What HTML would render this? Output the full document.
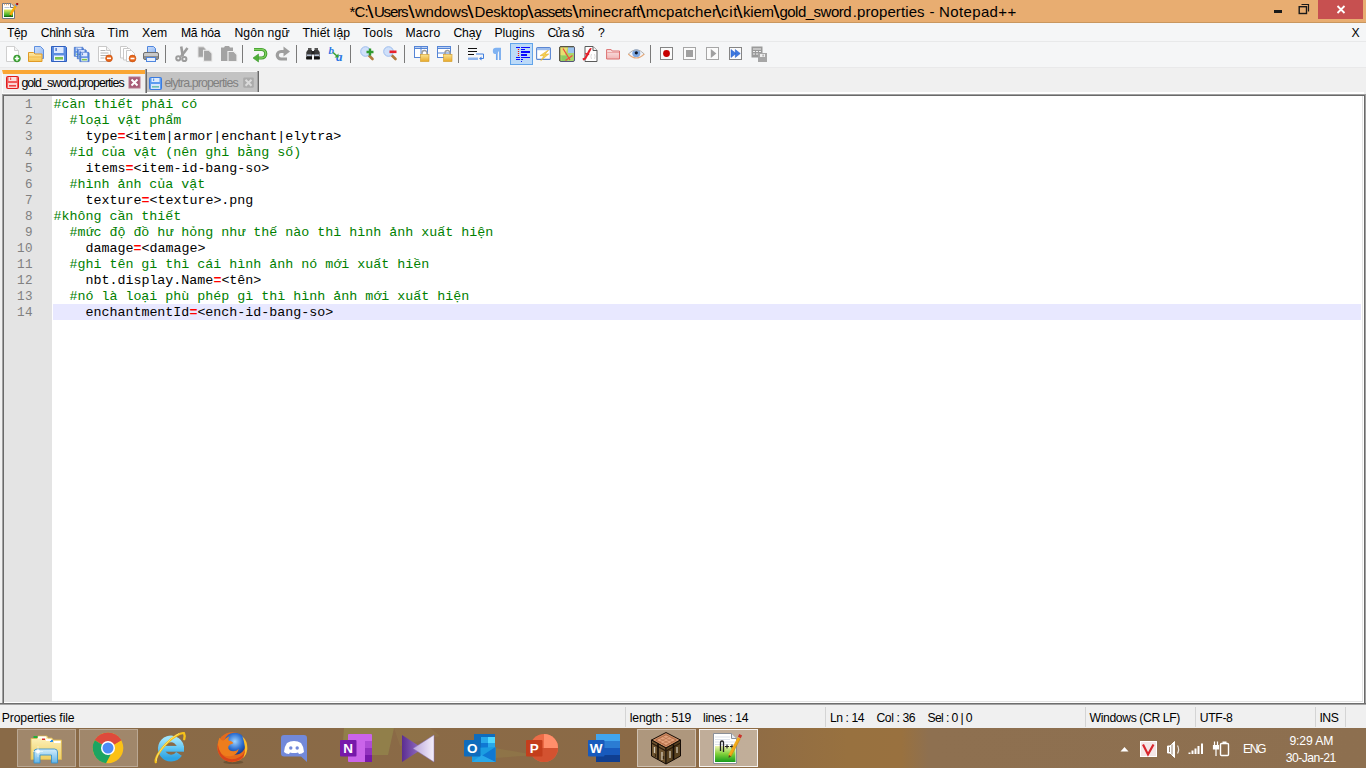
<!DOCTYPE html>
<html lang="vi">
<head>
<meta charset="utf-8">
<title>Notepad++</title>
<style>
*{box-sizing:border-box;margin:0;padding:0}
html,body{width:1366px;height:768px;overflow:hidden;background:#f0f0f0}
body{position:relative;font-family:"Liberation Sans",sans-serif;font-size:12px;color:#000}
.abs{position:absolute}
.t{position:absolute;white-space:pre;line-height:normal;font-family:"Liberation Sans",sans-serif}
#titlebar{left:0;top:0;width:1366px;height:23px;background:#e8ad71;border-bottom:1px solid #c9975f}
#closebtn{left:1318px;top:0;width:45px;height:19px;background:#c75050}
#menubar{left:0;top:23px;width:1366px;height:19px;background:#f5f6f7;border-bottom:1px solid #e8e9ea}
#toolbar{left:0;top:42px;width:1366px;height:25.5px;background:#f5f6f7;border-bottom:1px solid #e9e9ea}
#tabbar{left:0;top:67.5px;width:1366px;height:27px;background:#f0f0f0}
.vl{position:absolute;width:1px}
#tab1{left:2px;top:70px;width:143px;height:23px;background:#f0f0f0;border-top:4px solid #faa634;border-left:1px solid #fbfbfb}
#tab2{left:147px;top:71px;width:110px;height:21px;background:#c3c3c3;border-top:1px solid #f6f6f6}
#edframe{left:2px;top:94px;width:1364px;height:611px;background:#fff;border-top:1px solid #a0a0a0;border-left:1px solid #a0a0a0;border-right:1px solid #a0a0a0;border-bottom:1px solid #a0a0a0}
#edframe2{left:3px;top:95px;width:1362px;height:609px;background:#fff;border-top:1px solid #696969;border-left:1px solid #696969;border-right:1px solid #696969;border-bottom:1px solid #696969}
#edinner{left:4px;top:96px;width:1360px;height:607px;background:#fff;border-right:2px solid #fff;border-bottom:2px solid #fff}
#edin2{left:4px;top:96px;width:1359px;height:606px;border-right:1px solid #e3e3e3;border-bottom:1px solid #e3e3e3}
#gutter{left:4px;top:96px;width:48px;height:605px;background:#e4e4e4}
.ln{position:absolute;left:4px;width:28.9px;text-align:right;font-family:"Liberation Mono",monospace;font-size:12.6px;letter-spacing:.44px;color:#808080;height:16px;line-height:16px;white-space:pre}
.cl{position:absolute;font-family:"Liberation Mono",monospace;font-size:13.33px;height:16px;line-height:16px;white-space:pre;color:#000}
.c{color:#008000}.e{color:#ff0000;font-weight:bold}
#curline{left:53px;top:304px;width:1308px;height:16px;background:#e8e8ff}
#statusbar{left:0;top:705px;width:1366px;height:23px;background:#f0f0f0}
#statusbar i{position:absolute;top:2px;width:1px;height:20px;background:#d4d4d4}
#taskbar{left:0;top:728px;width:1366px;height:40px;background:linear-gradient(90deg,#896a47 0,#8b6a46 50%,#8f6c45 55%,#98713f 62%,#99713f 66%,#8e7050 68%,#8d6f4f 100%)}
.tb{position:absolute;top:729px;width:58.5px;height:38px;background:rgba(255,255,255,.2);border:1px solid rgba(255,255,255,.28)}
</style>
</head>
<body>
<div id="titlebar" class="abs"></div>
<svg class="abs" style="left:0;top:0" width="24" height="23" viewBox="0 0 24 23">
<defs><linearGradient id="ng" x1="0" y1="0" x2="0" y2="1"><stop offset="0" stop-color="#e6ea62"/><stop offset=".75" stop-color="#3fae28"/><stop offset="1" stop-color="#0c5a0a"/></linearGradient></defs>
<path d="M2.5 3.500h8.500l3.500 3.500v11.500h-12z" fill="#fff" stroke="#707782"/>
<path d="M10.500 3.500v4h4" fill="#eef1f5" stroke="#707782"/>
<path d="M4 4.500h1M6 4.500h1M8 4.500h1" stroke="#e8ab70" stroke-width="1.400"/>
<path d="M4.500 7.500h5" stroke="#b9c6d6" stroke-width="1"/>
<rect x="4" y="9.500" width="9" height="7.500" fill="url(#ng)"/>
<path d="M10.300 15.200l5.700-10" stroke="#f5ab0c" stroke-width="2.400"/>
<path d="M9.600 16.500l.4-1.800 1.200.7z" fill="#4a3a20"/>
<path d="M15.600 6l1-1.700" stroke="#7d9cc4" stroke-width="2.600"/>
<rect x="16.200" y="3" width="2" height="2" fill="#a30d12"/>
</svg>
<div id="closebtn" class="abs"></div>
<svg class="abs" style="left:1270px;top:0" width="96" height="23" viewBox="0 0 96 23">
<rect x="4" y="10" width="8" height="3" fill="#1a1a1a"/>
<path d="M31.500 4.500h7v7" fill="none" stroke="#1a1a1a" stroke-width="1.200"/>
<rect x="29.200" y="6.700" width="7.300" height="6.800" fill="none" stroke="#1a1a1a" stroke-width="1.400"/>
<path d="M67.500 6l7 7M74.500 6l-7 7" stroke="#fff" stroke-width="1.800"/>
</svg>
<div id="menubar" class="abs"></div>
<div id="toolbar" class="abs"></div>
<svg id="tbsvg" class="abs" style="left:0;top:42px" width="1366" height="26" viewBox="0 0 1366 26">
<defs>
<linearGradient id="gFold" x1="0" y1="0" x2="0" y2="1"><stop offset="0" stop-color="#fde9a8"/><stop offset="1" stop-color="#f6c453"/></linearGradient>
<linearGradient id="gLock" x1="0" y1="0" x2="0" y2="1"><stop offset="0" stop-color="#fbe38f"/><stop offset="1" stop-color="#e8a92a"/></linearGradient>
<linearGradient id="gPage" x1="0" y1="0" x2="1" y2="1"><stop offset="0" stop-color="#cfe0fb"/><stop offset="1" stop-color="#8fb5ef"/></linearGradient>
<linearGradient id="gPink" x1="0" y1="0" x2="0" y2="1"><stop offset="0" stop-color="#fbe6e6"/><stop offset="1" stop-color="#f0b6b6"/></linearGradient>
<g id="floppy"><path d="M0.5 0.5h14l1 1v14h-15z" fill="#5b8de0" stroke="#2f5fc0"/><rect x="3" y="1" width="9.5" height="6" fill="#dfeaff"/><rect x="4.5" y="2" width="1.2" height="3" fill="#2f5fc0"/><rect x="3" y="9.5" width="10" height="5.5" fill="#eef3ff"/><rect x="4" y="11" width="8" height="2.6" fill="#7cc34a"/></g>
<g id="minus"><circle cx="0" cy="0" r="3.4" fill="#e8661a" stroke="#c24e0c" stroke-width=".6"/><rect x="-2" y="-.8" width="4" height="1.6" fill="#fff"/></g>
<g id="sep"><rect x="0" y="3" width="1" height="18" fill="#7a7a7a"/></g>
</defs>
<!-- new -->
<g transform="translate(5,4)"><path d="M1.5 .5h8l4 4v11h-12z" fill="#fff" stroke="#cfcfcf"/><path d="M9.5 .5v4h4" fill="#f2f2f2" stroke="#cfcfcf"/><circle cx="12" cy="12.5" r="3.4" fill="#3faa35" stroke="#2a8424" stroke-width=".6"/><path d="M12 10.3v4.4M9.8 12.5h4.4" stroke="#fff" stroke-width="1.5"/></g>
<!-- open -->
<g transform="translate(28,4)"><path d="M6.5 .5h6l3 3v9h-9z" fill="url(#gPage)" stroke="#5d8fe0"/><path d="M.5 6.500h5l1.500 1.500h7v7.500h-13.500z" fill="url(#gFold)" stroke="#e09a26"/><path d="M1 11h12.500" stroke="#f1b84a" stroke-width="1"/></g>
<!-- save -->
<g transform="translate(51,4)"><use href="#floppy"/></g>
<!-- save all -->
<g transform="translate(74,4)"><g transform="translate(0,1) scale(.6)"><use href="#floppy"/></g><g transform="translate(3,3.500) scale(.6)"><use href="#floppy"/></g><g transform="translate(5.500,6) scale(.62)"><use href="#floppy"/></g></g>
<!-- close -->
<g transform="translate(97,4)"><path d="M1.500 .5h8l4 4v11h-12z" fill="#fff" stroke="#c9c9c9"/><path d="M9.500 .5v4h4" fill="#f2f2f2" stroke="#c9c9c9"/><path d="M3.500 4.500h5M3.500 7h8M3.500 9.500h8M3.500 12h4" stroke="#b5b5b5" stroke-width="1"/><use href="#minus" x="12" y="12.300"/></g>
<!-- close all -->
<g transform="translate(120,4)"><path d="M.5 .5h6l3 3v8.500h-9z" fill="#fff" stroke="#c9c9c9"/><path d="M3.500 2.500h6l3 3v8.500h-9z" fill="#fff" stroke="#c9c9c9"/><path d="M6.500 4.500h5l3 3v8h-8z" fill="#fff" stroke="#c9c9c9"/><use href="#minus" x="12.500" y="12.500"/></g>
<!-- print -->
<g transform="translate(143,4)"><path d="M4.500 .5h6l2 2v5h-8z" fill="url(#gPage)" stroke="#4f86de"/><rect x=".5" y="6.500" width="15" height="7" rx="1.500" fill="#c9c9c9" stroke="#6f6f6f"/><rect x="1" y="10" width="14" height="3" fill="#8e8e8e"/><rect x="3.500" y="11.500" width="9" height="4" fill="#e8f1ff" stroke="#4f86de"/></g>
<use href="#sep" x="165"/>
<!-- cut -->
<g transform="translate(175,4)" fill="none" stroke="#9c9c9c"><path d="M6.200 .5l1.600 9.500" stroke-width="2.600"/><path d="M12.500 2l-6.500 8.500" stroke-width="2.600"/><circle cx="3.300" cy="12.300" r="2.100" stroke-width="2"/><circle cx="9.300" cy="13" r="2.100" stroke-width="2"/></g>
<!-- copy -->
<g transform="translate(197,4)"><path d="M1 .8h5.500l2.500 2.500v8h-8z" fill="#a4a4a4" stroke="#e4e4e4" stroke-width="1"/><path d="M6.500 4.300h5.500l3 3v8h-8.500z" fill="#a4a4a4" stroke="#ececec" stroke-width="1.100"/></g>
<!-- paste -->
<g transform="translate(221,4)"><path d="M0 1.500h3l1-1.500h4l1 1.500h3v13.500h-12z" fill="#a3a3a3"/><path d="M7 5.500h6l3 3v7h-9z" fill="#a6a6a6" stroke="#f0f0f0" stroke-width="1.200"/></g>
<use href="#sep" x="242"/>
<!-- undo -->
<g transform="translate(252,4)"><path d="M2 3.500h7.500a4 4 0 0 1 0 8.500h-4.500" fill="none" stroke="#3d9a2c" stroke-width="3.200"/><path d="M2 3.500h7.500a4 4 0 0 1 0 8.500h-4.500" fill="none" stroke="#7fd05e" stroke-width="1.400"/><path d="M6.500 8l-5.500 4 5.500 4z" fill="#4fae39" stroke="#3d9a2c" stroke-width=".6"/></g>
<!-- redo -->
<g transform="translate(275,4)"><path d="M10 5.500h-4a3.500 3.500 0 0 0 0 7.500h6" fill="none" stroke="#9e9e9e" stroke-width="3.200"/><path d="M8.500 .5l6.500 5-6.500 5z" fill="#9e9e9e"/></g>
<use href="#sep" x="296"/>
<!-- find binoculars -->
<g transform="translate(306,4.500)"><path d="M2 1.500h3.500v3h-3.500zM8.500 1.500h3.500v3h-3.500z" fill="#555"/><path d="M.3 5.500l1.500-2h4.200v9h-5.700zM13.700 5.500l-1.500-2h-4.200v9h5.700z" fill="#3a3a3a"/><rect x="5.500" y="4.500" width="3" height="3.500" fill="#222"/><rect x=".8" y="8" width="4.800" height="1.400" fill="#c4d0e4"/><rect x="8.400" y="8" width="4.800" height="1.400" fill="#c4d0e4"/><rect x=".3" y="10.500" width="5.700" height="2.500" fill="#111"/><rect x="8" y="10.500" width="5.700" height="2.500" fill="#111"/></g>
<!-- replace -->
<g transform="translate(329,4)"><text x="-.5" y="8" font-family="Liberation Serif,serif" font-style="italic" font-weight="bold" font-size="11" fill="#2a78e4">b</text><text x="7" y="15" font-family="Liberation Serif,serif" font-style="italic" font-weight="bold" font-size="13" fill="#2a78e4">a</text><path d="M4 6.500l4 3.500" stroke="#3aa335" stroke-width="1.600"/><path d="M5.500 11.500h4v-4z" fill="#3aa335"/></g>
<use href="#sep" x="350"/>
<!-- zoom in -->
<g transform="translate(360,4)"><path d="M8 8.500l4.500 4.500" stroke="#b07a3c" stroke-width="2.600" stroke-linecap="round"/><circle cx="5.500" cy="5.500" r="4.800" fill="#cfe0fa" stroke="#9dbdee" stroke-width="1"/><path d="M10 2.500v7M6.500 6h7" stroke="#2f9a2f" stroke-width="2.400"/></g>
<!-- zoom out -->
<g transform="translate(383,4)"><path d="M8 8.500l4.500 4.500" stroke="#b07a3c" stroke-width="2.600" stroke-linecap="round"/><circle cx="5.500" cy="5.500" r="4.800" fill="#cfe0fa" stroke="#9dbdee" stroke-width="1"/><rect x="6.500" y="4.500" width="7" height="2.600" fill="#e8212c"/></g>
<use href="#sep" x="404"/>
<!-- sync v -->
<g transform="translate(414,4)"><rect x=".5" y=".5" width="13" height="11" fill="#fff" stroke="#5585d6"/><rect x=".5" y=".5" width="13" height="2" fill="#b9cff4" stroke="#5585d6"/><path d="M7 .5v11" stroke="#5585d6"/><path d="M8 8.500v-1.500a2.500 2.500 0 0 1 5 0v1.500" fill="none" stroke="#9c9c9c" stroke-width="1.500"/><rect x="6.500" y="8.500" width="8.500" height="7" fill="url(#gLock)" stroke="#d39922" stroke-width=".6"/></g>
<!-- sync h -->
<g transform="translate(437,4)"><rect x=".5" y=".5" width="13" height="11" fill="#fff" stroke="#5585d6"/><rect x=".5" y=".5" width="13" height="2" fill="#b9cff4" stroke="#5585d6"/><path d="M.5 7h13" stroke="#5585d6"/><path d="M8 8.500v-1.500a2.500 2.500 0 0 1 5 0v1.500" fill="none" stroke="#9c9c9c" stroke-width="1.500"/><rect x="6.500" y="8.500" width="8.500" height="7" fill="url(#gLock)" stroke="#d39922" stroke-width=".6"/></g>
<use href="#sep" x="458"/>
<!-- wrap -->
<g transform="translate(468,4)"><path d="M0 2.500h9M0 5.500h9" stroke="#111" stroke-width="1"/><path d="M0 8.500h6" stroke="#111" stroke-width="1"/><path d="M8 8h7.500v4.500h-3" fill="none" stroke="#3f7fe0" stroke-width="1"/><path d="M13.500 10.500l-2.500 2 2.500 2z" fill="#3f7fe0"/><rect x="0" y="11.500" width="10" height="2.500" fill="#8db4ee"/></g>
<!-- all chars -->
<g transform="translate(491,4)"><path d="M5.800 2v12M9 2v12" stroke="#6ea6ee" stroke-width="1.700"/><path d="M10 1.700h-5a3.200 3.200 0 0 0 0 6.400h1z" fill="#7fb2f2"/></g>
<!-- indent guide (active) -->
<rect x="510.500" y="1.500" width="22" height="21" fill="#bcdaf8" stroke="#62a4ea"/>
<g transform="translate(514,4)"><path d="M2 1.500h4M7 1.500h9M7 3.500h4M2 11.500h4M7 11.500h9M2 13.500h4M7 13.500h2M7 15.500h1" stroke="#0a0aff" stroke-width="1.100"/><path d="M7 6h9M7 9h6" stroke="#0a0aff" stroke-width="1.800"/><path d="M4.500 3v7.500" stroke="#f01010" stroke-width="1.200" stroke-dasharray="1.100 .9"/></g>
<!-- udl -->
<g transform="translate(536,4)"><rect x=".6" y="1.600" width="13.800" height="11.800" rx="1" fill="#fff" stroke="#5a86d2" stroke-width="1.100"/><rect x="1" y="2" width="13" height="2.200" fill="#9dbdee"/><path d="M11.500 4.500l-7.500 5.200h3.800l-3 5 8-6.700h-3.800l3.500-3.500z" fill="#f3cf52" stroke="#e0aa28" stroke-width=".5"/></g>
<!-- doc map -->
<g transform="translate(559,4)"><rect x=".5" y=".5" width="15" height="15" rx="1.500" fill="#a9d66c" stroke="#55557a"/><path d="M1 1h8l-3 8h-5z" fill="#e6e070"/><rect x="9" y="1" width="6" height="6" fill="#9cc4ee"/><path d="M2.500 10h6v5h-6z" fill="#8ccc60"/><path d="M1 .8h14M.8 1v14" stroke="#5a5632" stroke-width="1"/><path d="M4 2.500l7 11.500M13.500 9.500l-7 5" stroke="#f0503c" stroke-width="1.300"/></g>
<!-- function list -->
<g transform="translate(582,4)"><path d="M3 .5h8l4 4v11h-12z" fill="#fff" stroke="#5a5a5a"/><path d="M11 .5v4h4" fill="#f4f4f4" stroke="#5a5a5a"/><path d="M.8 13.500l2.500-1 4.500-8.500q.6-1.200 1.500-.8" fill="none" stroke="#e4202c" stroke-width="2.100"/><path d="M3.200 7.500l4 1" stroke="#e4202c" stroke-width="1.500"/><path d="M9.500 8q-1.200 2.500 0 5M12.500 8q1.200 2.500 0 5" fill="none" stroke="#d8d8d8" stroke-width=".9"/></g>
<!-- folder workspace -->
<g transform="translate(606,3)"><path d="M.6 4.600h4.600l1 1.400h7.300v8h-12.900z" fill="url(#gPink)" stroke="#dc6f6f"/><path d="M1.200 7.500h11.800" stroke="#e79a9a" stroke-width=".8"/></g>
<!-- eye -->
<g transform="translate(628,4)"><path d="M.3 8q8-8.500 16 0q-8 8-16 0z" fill="#f2f4f8"/><circle cx="8.300" cy="7.300" r="4" fill="#7fa9e2"/><circle cx="8.300" cy="6.800" r="1.600" fill="#101828"/><path d="M.3 8q8-8.500 16 0" fill="none" stroke="#b0b0b0" stroke-width="1"/><path d="M.3 8q8 8 16 0" fill="none" stroke="#e4a878" stroke-width="1.100"/></g>
<use href="#sep" x="650"/>
<!-- record -->
<g transform="translate(660,4)"><rect x=".5" y="1.500" width="12" height="12" fill="#fbfbfb" stroke="#858585"/><circle cx="6.500" cy="7.500" r="3.400" fill="#c80000"/></g>
<!-- stop -->
<g transform="translate(683,4)"><rect x=".5" y="1.500" width="12" height="12" fill="#fbfbfb" stroke="#a6a6a6"/><rect x="3" y="4" width="7" height="7" fill="#a0a0a0"/></g>
<!-- play -->
<g transform="translate(706,4)"><rect x=".5" y="1.500" width="12" height="12" fill="#fbfbfb" stroke="#a6a6a6"/><path d="M4.800 3l5.600 4.500-5.600 4.500z" fill="#a0a0a0"/></g>
<!-- play multi -->
<g transform="translate(729,4)"><rect x=".5" y="1.500" width="12" height="12" fill="#fbfbfb" stroke="#858585"/><path d="M2 3.500l5 4-5 4zM6.300 3.500l5 4-5 4z" fill="#3c78e0" stroke="#2a5fc4" stroke-width=".5"/></g>
<!-- save macro -->
<g transform="translate(751,4)"><rect x=".5" y=".5" width="11" height="11" fill="#9a9a9a"/><path d="M2 3h8M2 5.500h2M5 5.500h2M8 5.500h2M2 8h2M5 8h2" stroke="#efefef" stroke-width="1"/><rect x="7" y="7" width="9" height="9" fill="#a6a6a6"/><rect x="9" y="8" width="5" height="3" fill="#efefef"/><rect x="11.500" y="8.500" width="1.200" height="2" fill="#9a9a9a"/></g>
</svg>

<div id="tabbar" class="abs"></div>
<div id="tab2" class="abs"></div>
<div id="tab1" class="abs"></div>
<div class="abs" style="left:147px;top:92px;width:1217px;height:2px;background:#fff"></div>
<div class="abs" style="left:2px;top:93px;width:145px;height:1px;background:#fcfcfc"></div>
<div class="vl" style="left:145px;top:69px;height:24px;background:#a0a0a0"></div><div class="vl" style="left:146px;top:69px;height:24px;background:#696969"></div>
<div class="vl" style="left:257px;top:71px;height:21px;background:#a0a0a0"></div><div class="vl" style="left:258px;top:71px;height:21px;background:#696969"></div>
<svg class="abs" style="left:0;top:68px" width="270" height="26" viewBox="0 0 270 26">
<defs><g id="tsave"><rect x=".5" y=".5" width="12" height="12" rx="1"/><rect x="2.500" y="1" width="8" height="4" fill="#fff" fill-opacity=".8" stroke="none"/><rect x="4" y="1.500" width="1.200" height="2.500" stroke="none"/><rect x="2" y="7" width="9" height="5" fill="#fff" fill-opacity=".75" stroke="none"/></g></defs>
<g transform="translate(6,8)" fill="#f05a5a" stroke="#e01b1b"><use href="#tsave"/><rect x="3" y="9" width="7" height="1.600" fill="#ee4444" stroke="none"/></g>
<g transform="translate(149,9)" fill="#5c9bf0" stroke="#3a7be0"><use href="#tsave"/><rect x="3" y="9" width="7" height="1.600" fill="#6fc0b0" stroke="none"/></g>
<rect x="129" y="9" width="11" height="11" fill="#a85b76"/><rect x="129" y="9" width="11" height="11" fill="none" stroke="#b87a8e" stroke-width="1"/>
<path d="M131.500 11.500l6 6M137.500 11.500l-6 6" stroke="#fff" stroke-width="2"/>
<rect x="243.200" y="9.500" width="10.600" height="10.300" rx="1.200" fill="#ababab"/>
<path d="M245.500 11.700l6 6M251.500 11.700l-6 6" stroke="#dadada" stroke-width="2"/>
</svg>
<div id="edframe" class="abs"></div>
<div id="edframe2" class="abs"></div>
<div id="edinner" class="abs"></div>
<div id="edin2" class="abs"></div>
<div id="gutter" class="abs"></div>
<div class="abs" style="left:0;top:703px;width:1366px;height:1px;background:#6e6e6e"></div><div class="abs" style="left:0;top:704px;width:1366px;height:1px;background:#a3a3a3"></div>
<div id="curline" class="abs"></div>
<div id="lines">
<div class="ln" style="top:97px">1</div>
<div class="cl" style="top:97px;left:53.4px"><span class="c">#cần thiết phải có</span></div>
<div class="ln" style="top:113px">2</div>
<div class="cl" style="top:113px;left:69.4px"><span class="c">#loại vật phẩm</span></div>
<div class="ln" style="top:129px">3</div>
<div class="cl" style="top:129px;left:85.4px">type<span class="e">=</span>&lt;item|armor|enchant|elytra&gt;</div>
<div class="ln" style="top:145px">4</div>
<div class="cl" style="top:145px;left:69.4px"><span class="c">#id của vật (nên ghi bằng số)</span></div>
<div class="ln" style="top:161px">5</div>
<div class="cl" style="top:161px;left:85.4px">items<span class="e">=</span>&lt;item-id-bang-so&gt;</div>
<div class="ln" style="top:177px">6</div>
<div class="cl" style="top:177px;left:69.4px"><span class="c">#hình ảnh của vật</span></div>
<div class="ln" style="top:193px">7</div>
<div class="cl" style="top:193px;left:85.4px">texture<span class="e">=</span>&lt;texture&gt;.png</div>
<div class="ln" style="top:209px">8</div>
<div class="cl" style="top:209px;left:53.4px"><span class="c">#không cần thiết</span></div>
<div class="ln" style="top:225px">9</div>
<div class="cl" style="top:225px;left:69.4px"><span class="c">#mức độ đồ hư hỏng như thế nào thì hình ảnh xuất hiện</span></div>
<div class="ln" style="top:241px">10</div>
<div class="cl" style="top:241px;left:85.4px">damage<span class="e">=</span>&lt;damage&gt;</div>
<div class="ln" style="top:257px">11</div>
<div class="cl" style="top:257px;left:69.4px"><span class="c">#ghi tên gì thì cái hình ảnh nó mới xuất hiền</span></div>
<div class="ln" style="top:273px">12</div>
<div class="cl" style="top:273px;left:85.4px">nbt.display.Name<span class="e">=</span>&lt;tên&gt;</div>
<div class="ln" style="top:289px">13</div>
<div class="cl" style="top:289px;left:69.4px"><span class="c">#nó là loại phù phép gì thì hình ảnh mới xuất hiện</span></div>
<div class="ln" style="top:305px">14</div>
<div class="cl" style="top:305px;left:85.4px">enchantmentId<span class="e">=</span>&lt;ench-id-bang-so&gt;</div>
</div>
<div id="statusbar" class="abs">
<i style="left:625px"></i><i style="left:825px"></i><i style="left:1085px"></i><i style="left:1195px"></i><i style="left:1315px"></i><i style="left:1345px"></i>
</div>
<div id="taskbar" class="abs"></div>
<div class="tb" style="left:17px"></div><div class="tb" style="left:79px"></div>
<div class="tb" style="left:637px;background:rgba(255,255,255,.3);border-color:rgba(255,255,255,.4)"></div>
<div class="tb" style="left:699px;background:rgba(255,255,255,.45);border-color:rgba(255,255,255,.85)"></div>
<svg class="abs" style="left:0;top:728px" width="1366" height="40" viewBox="0 0 1366 40">
<defs>
<linearGradient id="fy" x1="0" y1="0" x2="0" y2="1"><stop offset="0" stop-color="#fdf3c0"/><stop offset="1" stop-color="#efcf62"/></linearGradient>
<linearGradient id="fb" x1="0" y1="0" x2="0" y2="1"><stop offset="0" stop-color="#d4eefc"/><stop offset="1" stop-color="#62b4e6"/></linearGradient>
<radialGradient id="ffg" cx=".5" cy=".4" r=".6"><stop offset="0" stop-color="#9fd4ff"/><stop offset=".6" stop-color="#2d6fd0"/><stop offset="1" stop-color="#153a8c"/></radialGradient>
<linearGradient id="vsl" x1="0" y1="0" x2="1" y2="0"><stop offset="0" stop-color="#5b2d91"/><stop offset="1" stop-color="#9a78c8"/></linearGradient>
<linearGradient id="vsr" x1="0" y1="0" x2="1" y2="0"><stop offset="0" stop-color="#b9a4dc"/><stop offset="1" stop-color="#f4effa"/></linearGradient>
<linearGradient id="npg" x1="0" y1="0" x2="0" y2="1"><stop offset="0" stop-color="#f0f4b0"/><stop offset=".5" stop-color="#7fd03a"/><stop offset="1" stop-color="#149a1a"/></linearGradient>
<linearGradient id="ieg" x1="0" y1="0" x2="0" y2="1"><stop offset="0" stop-color="#9ee4fc"/><stop offset="1" stop-color="#2ea4e4"/></linearGradient><linearGradient id="ieg2" x1="0" y1="0" x2="0" y2="1"><stop offset="0" stop-color="#6fd0f8"/><stop offset="1" stop-color="#4ab8ee"/></linearGradient>
</defs>
<!-- faint wallpaper shapes -->
<path d="M344 0h50l-6 27h-46z" fill="#9aa050" fill-opacity=".4"/>
<path d="M394 0h36l10 8-40 10z" fill="#a59a58" fill-opacity=".15"/>
<path d="M495 20l40 7-40 3z" fill="#a0a050" fill-opacity=".2"/>
<!-- explorer -->
<g transform="translate(30,5)">
<path d="M1 5.500h6l1-2.500h9l1 2h4l1 2h8.500v19.500h-30.500z" fill="url(#fy)" stroke="#dcb850" stroke-width=".8"/>
<rect x="3.500" y="3" width="4" height="2" fill="#1fae3a"/><rect x="12" y="5" width="3" height="2" fill="#d8322a"/><rect x="20" y="7" width="3" height="2" fill="#2a8ee8"/>
<path d="M8 3.500h8v2h-8zM16 6h5v2h-5zM24 8h6.500v2h-6.500z" fill="#fff"/>
<path d="M4 30v-11q0-3 3-3h17.500q3 0 3 3v11h-6v-8h-11.500v8z" fill="url(#fb)" stroke="#3a92cc" stroke-width=".9"/>
<circle cx="8" cy="18.500" r="2" fill="#fff" fill-opacity=".95"/><path d="M8 13v11M3 18.500h10" stroke="#fff" stroke-width=".6" stroke-opacity=".8"/>
</g>
<!-- chrome -->
<g transform="translate(108,20)">
<circle r="15.300" fill="#fbc116"/>
<path d="M0 0L-13.250 -7.650A15.300 15.300 0 0 1 13.250 -7.650z" fill="#de4a3c"/>
<path d="M-13.250 -7.650A15.300 15.300 0 0 1 13.250 -7.650L0 -7z" fill="#de4a3c"/>
<path d="M0 0L-13.250 -7.650A15.300 15.300 0 0 0 -2 15.170L4 4z" fill="#1da462"/>
<path d="M0 0L13.250 -7.650H0z" fill="#de4a3c"/>
<circle r="7" fill="#fff"/><circle r="5.500" fill="#4c8bf5"/>
</g>
<!-- IE -->
<g transform="translate(171,20.500)">
<path d="M8 5.300A9.600 9.600 0 1 1 9.600 0" fill="none" stroke="url(#ieg)" stroke-width="6.800"/>
<rect x="-9.600" y="-2.600" width="22.600" height="5.800" fill="url(#ieg2)"/>
<path d="M-15.200 13.600A20.500 6.500 -46 0 1 13 -15.300q1.200 2.200 .2 6" fill="none" stroke="#f6c21a" stroke-width="2.300" stroke-linecap="round"/>
<path d="M-14.600 12.600A20.500 6.500 -46 0 1 8 -15" fill="none" stroke="#fde98a" stroke-width=".7"/>
</g>
<!-- firefox -->
<g transform="translate(232.300,19.200)">
<ellipse cx="1" cy="15" rx="10" ry="1.800" fill="#3a2a18" fill-opacity=".35"/>
<circle r="15" fill="#e66a1a"/>
<circle cx="2.500" cy="-3.500" r="11" fill="url(#ffg)"/>
<path d="M-12.500 -9q1.500 2 3.500 2.500q2-3 6-4.500q-1.500 2.500-.5 4.500q3.500 0 4.500 2.500l-3.500 1.500q-2 1-1.500 3.500q1 3 5 3q3.500 0 5.500-2.500q-1.500 6.500-8.500 7.500q-8 .5-11.500-6q-2-5 .5-12.500z" fill="#ee7d1c"/>
<path d="M-14.500 -3q-1.500 9 5.500 15q8 5.500 17 0q6-4.500 6.500-12q-2.500 9-11 11.500q-9 2-14.500-5q-3-4.500-3.500-9.500z" fill="#d9441a"/>
<path d="M10 -11q5.500 5 5 13q-.5 5-4 9q2.500-6 1.500-12q-.5-5-2.500-10z" fill="#fbc02a"/>
</g>
<!-- discord -->
<g transform="translate(281,7)">
<path d="M3 0h20q3 0 3 3v24l-6-5.500h-17q-3 0-3-3v-15.500q0-3 3-3z" fill="#7289da"/>
<path d="M6 8q3-2 7-2t7 2q3 4 3 9q-2 2-5 2l-1-1.500q-4 1-8 0l-1 1.500q-3 0-5-2q0-5 3-9z" fill="#fff"/>
<circle cx="9.800" cy="13" r="1.700" fill="#7289da"/><circle cx="16.200" cy="13" r="1.700" fill="#7289da"/>
</g>
<!-- onenote -->
<g transform="translate(340,6)">
<rect x="8" y="0" width="24" height="28" rx="1" fill="#ca64ea"/>
<rect x="25" y="7" width="7" height="7" fill="#ae4bd5"/><rect x="25" y="14" width="7" height="7" fill="#9332bf"/><rect x="25" y="21" width="7" height="7" fill="#7719aa"/>
<rect x="0" y="6" width="16.500" height="16.500" rx="1" fill="#7719aa"/>
<text x="8.200" y="19.300" text-anchor="middle" font-family="Liberation Sans,sans-serif" font-weight="bold" font-size="13.500" fill="#fff">N</text>
</g>
<!-- visual studio -->
<g transform="translate(402,7)">
<path d="M0 0l21 13.500-21 13.500z" fill="url(#vsl)"/>
<path d="M32 0v27l-21-13.500z" fill="url(#vsr)" stroke="#8a72b8" stroke-width=".5"/>
</g>
<!-- outlook -->
<g transform="translate(464,6)">
<rect x="10" y="0" width="21" height="20" fill="#0f6cbd"/>
<rect x="17" y="3" width="7" height="6" fill="#28a8ea"/><rect x="24" y="3" width="7" height="6" fill="#50d9ff"/><rect x="17" y="9" width="7" height="6" fill="#0f78d4"/><rect x="24" y="9" width="7" height="6" fill="#28a8ea"/>
<path d="M8 14l23.500-1v15h-23.500z" fill="#1b9de2"/><path d="M31.500 13l-14 9 14 6z" fill="#0f78d4"/><path d="M8 28h23.500l-14-7z" fill="#28a8ea"/>
<rect x="0" y="6" width="16.500" height="16.500" rx="1" fill="#0f6cbd"/>
<text x="8.200" y="19.300" text-anchor="middle" font-family="Liberation Sans,sans-serif" font-weight="bold" font-size="13.500" fill="#fff">O</text>
</g>
<!-- powerpoint -->
<g transform="translate(526,6)">
<circle cx="18" cy="14" r="14" fill="#ed6c47"/>
<path d="M18 0a14 14 0 0 1 14 14h-14z" fill="#ff8f6b"/>
<path d="M4 14h28a14 14 0 0 1-28 0z" fill="#d35230"/>
<rect x="0" y="6" width="16.500" height="16.500" rx="1" fill="#c43e1c"/>
<text x="8.200" y="19.300" text-anchor="middle" font-family="Liberation Sans,sans-serif" font-weight="bold" font-size="13.500" fill="#fff">P</text>
</g>
<!-- word -->
<g transform="translate(588,6)">
<rect x="8" y="0" width="24" height="7" fill="#41a5ee"/><rect x="8" y="7" width="24" height="7" fill="#2b7cd3"/><rect x="8" y="14" width="24" height="7" fill="#185abd"/><rect x="8" y="21" width="24" height="7" fill="#103f91"/>
<rect x="0" y="6" width="16.500" height="16.500" rx="1" fill="#185abd"/>
<text x="8.200" y="19.300" text-anchor="middle" font-family="Liberation Sans,sans-serif" font-weight="bold" font-size="13.500" fill="#fff">W</text>
</g>
<!-- crafting table -->
<g transform="translate(651,4)">
<path d="M15 .5l14.500 7.500-14.500 8-14.500-8z" fill="#c98a62" stroke="#1a1008" stroke-width="1"/>
<path d="M.5 8l14.500 8v16l-14.500-8z" fill="#6e5430" stroke="#140c06" stroke-width="1"/>
<path d="M29.500 8l-14.500 8v16l14.500-8z" fill="#57411f" stroke="#140c06" stroke-width="1"/>
<path d="M15 2.800l10 5.200-10 5.500-10-5.500z" fill="#e2a27c" stroke="#a8623e" stroke-width=".8"/>
<path d="M11.500 4.600l10 5.300M8.300 6.300l10 5.400M18.500 4.600l-10 5.300M21.700 6.300l-10 5.400" stroke="#b8744e" stroke-width=".7" fill="none"/>
<path d="M.5 11l14.500 8 14.500-8" fill="none" stroke="#2a1a0c" stroke-width="1.200"/>
<path d="M7 12v15.500M22.500 12.500v15" stroke="#140c06" stroke-width="1.600"/>
<path d="M3.500 15v6M11 20v8M19 19v7M26 15v6" stroke="#cfc6b4" stroke-width="1.300"/>
<path d="M4.500 22v3M12.500 24v3" stroke="#3a2a14" stroke-width="1.300"/>
</g>
<!-- notepad++ -->
<g transform="translate(713,4)">
<path d="M.5 1.500h18l5 5v25h-23z" fill="#fff" stroke="#8a8f98"/>
<path d="M18.500 1.500v5h5" fill="#e8ecf2" stroke="#8a8f98"/>
<path d="M2 5h15M2 7.500h15M2 10h20M2 12.500h20" stroke="#cfd6e2" stroke-width=".7"/>
<rect x="2" y="14" width="20.500" height="16" fill="url(#npg)"/>
<path d="M7.500 19v-8.500q0-1.500 1.500-1.500t1.500 1.500v9.500" fill="none" stroke="#222" stroke-width="1.300"/>
<path d="M12 14.500h4M14 12.500v4M17 14.500h4M19 12.500v4" stroke="#222" stroke-width="1.100"/>
<path d="M16.500 24l9.500-18" stroke="#f2aa1a" stroke-width="3"/><path d="M16.500 24l9.500-18" stroke="#c98410" stroke-width=".6" transform="translate(1.300,.6)"/>
<path d="M15.600 26l.3-3 2.300 1.200z" fill="#5a4020"/>
<path d="M26.300 5.500l1.400-2.700" stroke="#c8342c" stroke-width="3.200"/>
</g>
<!-- tray -->
<path d="M1120.500 23.500l4-4.500 4 4.500z" fill="#fff"/>
<rect x="1140.500" y="13.500" width="16" height="15" fill="#f4e6e6" stroke="#fff" stroke-width="1"/>
<path d="M1143 16.500l5 10 5.500-10" fill="none" stroke="#d8262c" stroke-width="2.200"/>
<path d="M1167.500 18h2.500l4.500-4.500v16l-4.500-4.500h-2.500z" fill="#fff" stroke="#fff" stroke-width="1"/><path d="M1169.500 19v5M1172 16.500v10" stroke="#6a5238" stroke-width=".7"/>
<path d="M1177.500 17.500q2.200 4 0 8" fill="none" stroke="#fff" stroke-width="1.200" stroke-opacity=".8"/>

<path d="M1189.500 26v-1.500M1192.500 26v-3.500M1195.500 26v-5.500M1198.500 26v-8M1202 26v-10.500" stroke="#fff" stroke-width="2"/>
<rect x="1220.500" y="15.500" width="8" height="12" rx="1" fill="none" stroke="#fff" stroke-width="1.400"/><rect x="1222.500" y="13.500" width="4" height="2" fill="#fff"/>
<path d="M1214.500 13.500v4M1217.500 13.500v4M1213.500 17.500h5v3.500h-5zM1216 21v7" stroke="#fff" stroke-width="1.200" fill="#fff"/>
</svg>

<span class="t" style="left:349.40px;top:3.03px;font-size:15px;letter-spacing:-0.822px;color:#000">*C:</span>
<span class="t" style="left:373.90px;top:3.03px;font-size:15px;letter-spacing:-1.118px;color:#000">Users</span>
<span class="t" style="left:414.90px;top:3.03px;font-size:15px;letter-spacing:-0.181px;color:#000">wndows</span>
<span class="t" style="left:474.50px;top:3.03px;font-size:15px;letter-spacing:-0.189px;color:#000">Desktop</span>
<span class="t" style="left:533.80px;top:3.03px;font-size:15px;letter-spacing:-0.912px;color:#000">assets</span>
<span class="t" style="left:578.40px;top:3.03px;font-size:15px;letter-spacing:0.039px;color:#000">minecraft</span>
<span class="t" style="left:645.80px;top:3.03px;font-size:15px;letter-spacing:0.146px;color:#000">mcpatcher</span>
<span class="t" style="left:720.90px;top:3.03px;font-size:15px;letter-spacing:0.800px;color:#000">cit</span>
<span class="t" style="left:742.90px;top:3.03px;font-size:15px;letter-spacing:-0.157px;color:#000">kiem</span>
<span class="t" style="left:779.40px;top:3.03px;font-size:15px;letter-spacing:-0.502px;color:#000">gold_sword</span>
<span class="t" style="left:852.70px;top:3.03px;font-size:15px;letter-spacing:0.103px;color:#000">.properties</span>
<span class="t" style="left:929.40px;top:3.03px;font-size:15px;letter-spacing:0.000px;color:#000">-</span>
<span class="t" style="left:939.10px;top:3.03px;font-size:15px;letter-spacing:0.358px;color:#000">Notepad++</span>
<span class="t" style="left:368.00px;top:2.36px;font-size:17.5px;letter-spacing:0.000px;color:#000;transform:scaleX(1.3)">\</span>
<span class="t" style="left:408.80px;top:2.36px;font-size:17.5px;letter-spacing:0.000px;color:#000;transform:scaleX(1.3)">\</span>
<span class="t" style="left:468.30px;top:2.36px;font-size:17.5px;letter-spacing:0.000px;color:#000;transform:scaleX(1.3)">\</span>
<span class="t" style="left:528.00px;top:2.36px;font-size:17.5px;letter-spacing:0.000px;color:#000;transform:scaleX(1.3)">\</span>
<span class="t" style="left:572.50px;top:2.36px;font-size:17.5px;letter-spacing:0.000px;color:#000;transform:scaleX(1.3)">\</span>
<span class="t" style="left:640.00px;top:2.36px;font-size:17.5px;letter-spacing:0.000px;color:#000;transform:scaleX(1.3)">\</span>
<span class="t" style="left:716.00px;top:2.36px;font-size:17.5px;letter-spacing:0.000px;color:#000;transform:scaleX(1.3)">\</span>
<span class="t" style="left:737.00px;top:2.36px;font-size:17.5px;letter-spacing:0.000px;color:#000;transform:scaleX(1.3)">\</span>
<span class="t" style="left:773.80px;top:2.36px;font-size:17.5px;letter-spacing:0.000px;color:#000;transform:scaleX(1.3)">\</span>
<span class="t" style="left:6.90px;top:25.96px;font-size:12.2px;letter-spacing:-0.258px;color:#000">Tệp</span>
<span class="t" style="left:40.70px;top:25.96px;font-size:12.2px;letter-spacing:-0.308px;color:#000">Chỉnh sửa</span>
<span class="t" style="left:107.40px;top:25.96px;font-size:12.2px;letter-spacing:0.108px;color:#000">Tìm</span>
<span class="t" style="left:142.10px;top:25.96px;font-size:12.2px;letter-spacing:-0.031px;color:#000">Xem</span>
<span class="t" style="left:180.90px;top:25.96px;font-size:12.2px;letter-spacing:-0.191px;color:#000">Mã hóa</span>
<span class="t" style="left:234.40px;top:25.96px;font-size:12.2px;letter-spacing:0.136px;color:#000">Ngôn ngữ</span>
<span class="t" style="left:302.40px;top:25.96px;font-size:12.2px;letter-spacing:0.119px;color:#000">Thiết lập</span>
<span class="t" style="left:362.70px;top:25.96px;font-size:12.2px;letter-spacing:0.362px;color:#000">Tools</span>
<span class="t" style="left:405.40px;top:25.96px;font-size:12.2px;letter-spacing:0.231px;color:#000">Macro</span>
<span class="t" style="left:453.40px;top:25.96px;font-size:12.2px;letter-spacing:-0.084px;color:#000">Chạy</span>
<span class="t" style="left:494.40px;top:25.96px;font-size:12.2px;letter-spacing:0.036px;color:#000">Plugins</span>
<span class="t" style="left:547.40px;top:25.96px;font-size:12.2px;letter-spacing:-0.640px;color:#000">Cửa sổ</span>
<span class="t" style="left:598.00px;top:25.96px;font-size:12.2px;letter-spacing:0.000px;color:#000">?</span>
<span class="t" style="left:1351.40px;top:25.96px;font-size:12.2px;letter-spacing:0.000px;color:#000">X</span>
<span class="t" style="left:21.40px;top:75.88px;font-size:12.4px;letter-spacing:-0.936px;color:#000">gold_sword.properties</span>
<span class="t" style="left:164.40px;top:75.88px;font-size:12.4px;letter-spacing:-0.915px;color:#808080">elytra.properties</span>
<span class="t" style="left:1.70px;top:710.96px;font-size:12.2px;letter-spacing:-0.115px;color:#000">Properties file</span>
<span class="t" style="left:629.80px;top:710.96px;font-size:12.2px;letter-spacing:-0.191px;color:#000">length : 519</span>
<span class="t" style="left:703.10px;top:710.96px;font-size:12.2px;letter-spacing:-0.376px;color:#000">lines : 14</span>
<span class="t" style="left:829.90px;top:710.96px;font-size:12.2px;letter-spacing:-0.430px;color:#000">Ln : 14</span>
<span class="t" style="left:876.40px;top:710.96px;font-size:12.2px;letter-spacing:-0.402px;color:#000">Col : 36</span>
<span class="t" style="left:927.40px;top:710.96px;font-size:12.2px;letter-spacing:-0.608px;color:#000">Sel : 0 | 0</span>
<span class="t" style="left:1089.60px;top:710.96px;font-size:12.2px;letter-spacing:-0.383px;color:#000">Windows (CR LF)</span>
<span class="t" style="left:1199.80px;top:710.96px;font-size:12.2px;letter-spacing:-0.358px;color:#000">UTF-8</span>
<span class="t" style="left:1319.40px;top:710.96px;font-size:12.2px;letter-spacing:-0.414px;color:#000">INS</span>
<span class="t" style="left:1242.90px;top:742.36px;font-size:12.2px;letter-spacing:-1.361px;color:#fff">ENG</span>
<span class="t" style="left:1289.40px;top:734.46px;font-size:12.2px;letter-spacing:-0.103px;color:#fff">9:29 AM</span>
<span class="t" style="left:1285.70px;top:751.16px;font-size:12.2px;letter-spacing:-0.536px;color:#fff">30-Jan-21</span>
</body>
</html>
